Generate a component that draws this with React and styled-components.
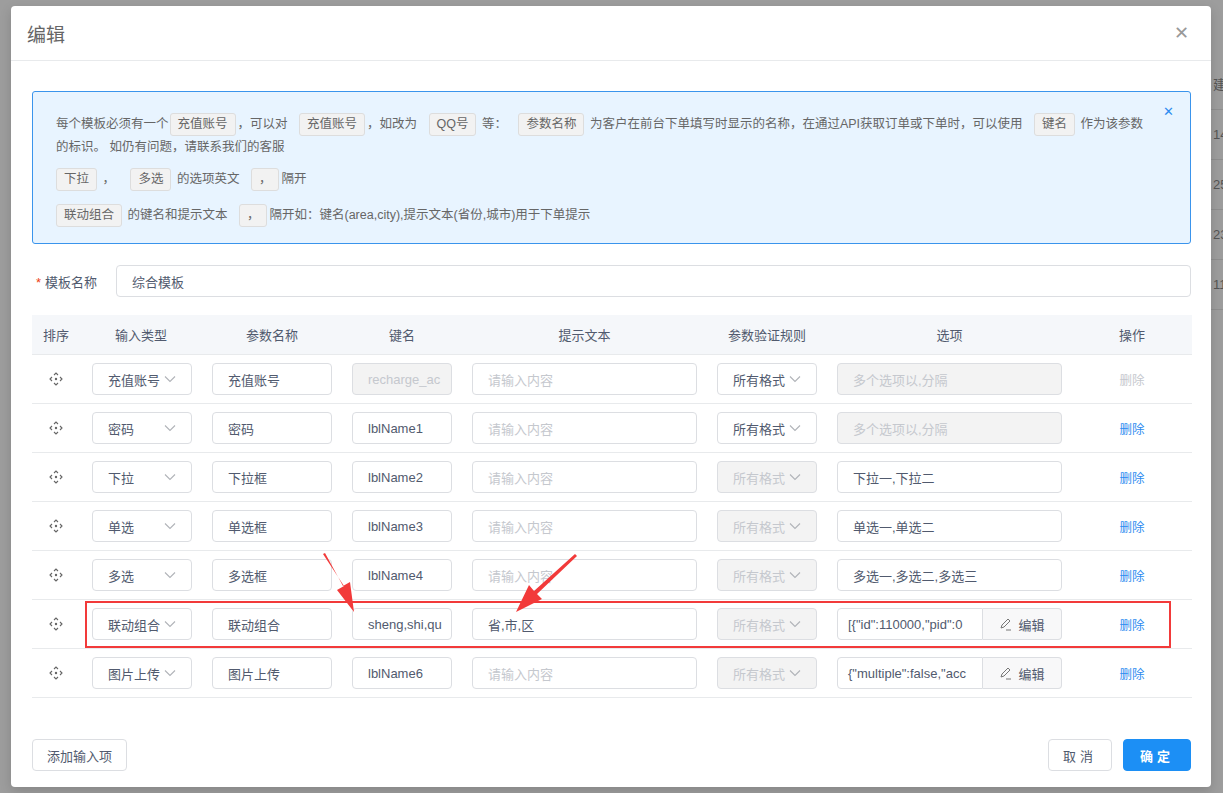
import React from "react";
import styled, { createGlobalStyle } from "styled-components";

const Global = createGlobalStyle`
  html,body{margin:0;padding:0;}
  body{background:#9d9d9d;font-family:"Liberation Sans","Noto Sans CJK SC",sans-serif;font-size:13px;color:#515a6e;overflow:hidden;}
`;

const Page = styled.div`
  position: relative; width: 1223px; height: 793px; overflow: hidden;
  padding: 6px 0 0 11px; box-sizing: border-box;
`;
const BgStrip = styled.div`
  position: absolute; left: 1211px; top: 60px; width: 40px;
  display: flex; flex-direction: column; color: #555; font-size: 13px;
`;
const BgCell = styled.div`
  height: 49px; line-height: 49px; border-bottom: 1px solid #8f8f8f; padding-left: 2px;
`;
const Dialog = styled.div`
  width: 1200px; height: 781px; background: #fff; border-radius: 4px;
  box-shadow: 0 4px 12px rgba(0,0,0,.15); display: flex; flex-direction: column; position: relative;
`;
const Header = styled.div`
  height: 54px; border-bottom: 1px solid #e8eaec; display: flex; align-items: center;
  justify-content: space-between; padding: 0 16px; flex-shrink: 0;
`;
const Title = styled.div` font-size: 19px; color: #666; `;
const Close = styled.div` color: #999; font-size: 18px; line-height: 1; padding-right: 6px;`;
const Body = styled.div` padding: 30px 20px 0 21px; flex: 1; display: flex; flex-direction: column; position: relative;`;
const Alert = styled.div`
  position: relative; background: #e8f4ff; border: 1px solid #3a94ec; border-radius: 3px;
  padding: 21px 38px 16px 23px; color: #666; font-size: 12.5px; line-height: 23px;
`;
const AlertClose = styled.div`
  position: absolute; right: 16px; top: 8px; color: #2d8cf0; font-size: 13px;
`;
const Para = styled.div` margin-bottom: ${p => p.$mb || 0}px; `;
const Tag = styled.span`
  display: inline-block; background: #f2f2f2; border: 1px solid #ddd; border-radius: 3px;
  padding: 0 7px; line-height: 21px; margin: 0 ${p => p.$mr ?? 2}px 0 ${p => p.$ml ?? 0}px; color: #666;
`;
const FormRow = styled.div` display: flex; align-items: center; margin-top: 21px; `;
const Label = styled.div` width: 80px; font-size: 13px; color: #515a6e; padding-left: 4px;
  &::before{content:"*";color:#ed4014;margin-right:4px;}
`;
const Input = styled.div`
  flex: ${p => p.$flex ? 1 : "none"}; width: ${p => p.$w ? p.$w + "px" : "auto"}; height: 32px; box-sizing: border-box;
  border: 1px solid #dcdee2; border-radius: 4px; padding: 0 15px; display: flex; align-items: center;
  background: ${p => p.$dis ? "#f3f3f3" : "#fff"}; color: ${p => p.$ph || p.$dis ? "#c5c8ce" : "#515a6e"};
  white-space: nowrap; overflow: hidden; font-size: 13px; justify-content: space-between;
`;
const Chevron = () => (
  <svg width="12" height="8" viewBox="0 0 12 8" style={{ flexShrink: 0 }}><path d="M1 1.5l5 5 5-5" fill="none" stroke="#b0b3b8" strokeWidth="1.1" /></svg>
);
const Table = styled.div` margin-top: 18px; width: 1160px; `;
const Grid = styled.div`
  display: grid; grid-template-columns: 48px 122px 140px 120px 245px 120px 245px 120px; box-sizing: border-box;
  align-items: center; height: ${p => p.$h}px; background: ${p => p.$head ? "#f5f7fa" : "#fff"};
  border-bottom: 1px solid #e8eaec; position: relative;
`;
const Th = styled.div` text-align: center; color: #515a6e; font-size: 13px; `;
const Td = styled.div` padding-left: ${p => p.$pl ?? 10}px; display: flex; align-items: center; justify-content: ${p => p.$center ? "center" : "flex-start"}; `;
const Del = styled.span` color: ${p => p.$dis ? "#c5c8ce" : "#2d8cf0"}; font-size: 12.5px; `;
const Group = styled.div` display: flex; width: 225px; height: 32px; `;
const GroupInput = styled(Input)` width: 146px; border-radius: 4px 0 0 4px; padding: 0 10px; text-overflow: clip;`;
const GroupBtn = styled.div`
  width: 79px; box-sizing: border-box; border: 1px solid #dcdee2; border-left: none; border-radius: 0 4px 4px 0;
  background: #f8f8f9; display: flex; align-items: center; justify-content: center; gap: 6px; color: #515a6e;
`;
const Highlight = styled.div`
  position: absolute; left: 53px; top: 1px; width: 1082px; height: 43px; border: 2.5px solid #f23a3a; pointer-events: none;
`;
const Arrows = styled.svg` position: absolute; left: 0; top: 0; pointer-events: none; `;
const Footer = styled.div` display: flex; align-items: center; margin-top: 41px; `;
const Btn = styled.div`
  height: 32px; box-sizing: border-box; padding: 0 ${p => p.$px || 14}px; border-radius: 4px; display: flex; align-items: center;
  border: 1px solid ${p => p.$primary ? "#1c8ff5" : "#dcdee2"}; background: ${p => p.$primary ? "#1c8ff5" : "#fff"};
  color: ${p => p.$primary ? "#fff" : "#515a6e"}; margin-left: ${p => p.$ml || 0}px; letter-spacing: ${p => p.$ls || 0}px;
  font-weight: ${p => p.$primary ? 600 : 400};
`;
const Spacer = styled.div` flex: 1; `;

const Drag = () => (
  <svg width="14" height="14" viewBox="0 0 14 14" fill="none" stroke="#666" strokeWidth="1.1">
    <path d="M5 3L7 1l2 2M5 11l2 2 2-2M3 5L1 7l2 2M11 5l2 2-2 2" />
    <circle cx="7" cy="7" r="1.2" fill="#666" stroke="none" />
  </svg>
);
const Pen = () => (
  <svg width="13" height="13" viewBox="0 0 13 13" fill="none" stroke="#777" strokeWidth="1"><path d="M2 10l1-3 6-6 2 2-6 6-3 1zM7 12h5" /></svg>
);

const rows = [
  { type: "充值账号", name: "充值账号", key: "recharge_ac", keyDis: true, rule: "所有格式", opt: "多个选项以,分隔", optDis: true, delDis: true },
  { type: "密码", name: "密码", key: "lblName1", rule: "所有格式", opt: "多个选项以,分隔", optDis: true },
  { type: "下拉", name: "下拉框", key: "lblName2", rule: "所有格式", ruleDis: true, opt: "下拉一,下拉二" },
  { type: "单选", name: "单选框", key: "lblName3", rule: "所有格式", ruleDis: true, opt: "单选一,单选二" },
  { type: "多选", name: "多选框", key: "lblName4", rule: "所有格式", ruleDis: true, opt: "多选一,多选二,多选三" },
  { type: "联动组合", name: "联动组合", key: "sheng,shi,qu", tip: "省,市,区", rule: "所有格式", ruleDis: true, group: '[{"id":110000,"pid":0', hl: true },
  { type: "图片上传", name: "图片上传", key: "lblName6", rule: "所有格式", ruleDis: true, group: '{"multiple":false,"acc' },
];

export default function App() {
  return (
    <Page>
      <Global />
      <BgStrip>
        <BgCell>建时</BgCell><BgCell>14</BgCell><BgCell>25</BgCell><BgCell>23</BgCell><BgCell>11</BgCell>
      </BgStrip>
      <Dialog>
        <Header><Title>编辑</Title><Close>✕</Close></Header>
        <Body>
          <Alert>
            <AlertClose>✕</AlertClose>
            <Para $mb={9}>每个模板必须有一个<Tag $ml={1} $mr={2}>充值账号</Tag>，可以对 <Tag $ml={8}>充值账号</Tag>，如改为 <Tag $ml={8}>QQ号</Tag> 等： <Tag $ml={8}>参数名称</Tag> 为客户在前台下单填写时显示的名称，在通过API获取订单或下单时，可以使用 <Tag $ml={8}>键名</Tag> 作为该参数的标识。 如仍有问题，请联系我们的客服</Para>
            <Para $mb={13}><Tag>下拉</Tag> ，  <Tag $ml={12}>多选</Tag> 的选项英文 <Tag $ml={8}>，</Tag>隔开</Para>
            <Para><Tag>联动组合</Tag> 的键名和提示文本 <Tag $ml={8}>，</Tag>隔开如：键名(area,city),提示文本(省份,城市)用于下单提示</Para>
          </Alert>
          <FormRow><Label>模板名称</Label><Input $flex>综合模板</Input></FormRow>
          <Table>
            <Grid $head $h={40}>
              {["排序", "输入类型", "参数名称", "键名", "提示文本", "参数验证规则", "选项", "操作"].map(h => <Th key={h}>{h}</Th>)}
            </Grid>
            {rows.map((r, i) => (
              <Grid key={i} $h={49}>
                {r.hl && <Highlight />}
                <Td $center $pl={0}><Drag /></Td>
                <Td $pl={12}><Input $w={100}>{r.type}<Chevron /></Input></Td>
                <Td><Input $w={120}>{r.name}</Input></Td>
                <Td><Input $w={100} $dis={r.keyDis}>{r.key}</Input></Td>
                <Td><Input $w={225} $ph={!r.tip}>{r.tip || "请输入内容"}</Input></Td>
                <Td><Input $w={100} $dis={r.ruleDis}>{r.rule}<Chevron /></Input></Td>
                <Td>
                  {r.group ? (
                    <Group><GroupInput>{r.group}</GroupInput><GroupBtn><Pen />编辑</GroupBtn></Group>
                  ) : (
                    <Input $w={225} $dis={r.optDis}>{r.opt}</Input>
                  )}
                </Td>
                <Td $center $pl={0}><Del $dis={r.delDis}>删除</Del></Td>
              </Grid>
            ))}
          </Table>
          <Arrows width="1180" height="700" viewBox="0 0 1180 700">
            <path d="M312 493 L333 525 L326 529 L343 551 L339 521 L332 525 L314 492 Z" fill="#f23a3a" />
            <path d="M564 493 L523 530 L518 524 L505 551 L531 538 L526 533 L566 495 Z" fill="#f23a3a" />
          </Arrows>
          <Footer>
            <Btn>添加输入项</Btn>
            <Spacer />
            <Btn $ls={4}>取消</Btn>
            <Btn $primary $ml={11} $ls={4} $px={16}>确定</Btn>
          </Footer>
        </Body>
      </Dialog>
    </Page>
  );
}
